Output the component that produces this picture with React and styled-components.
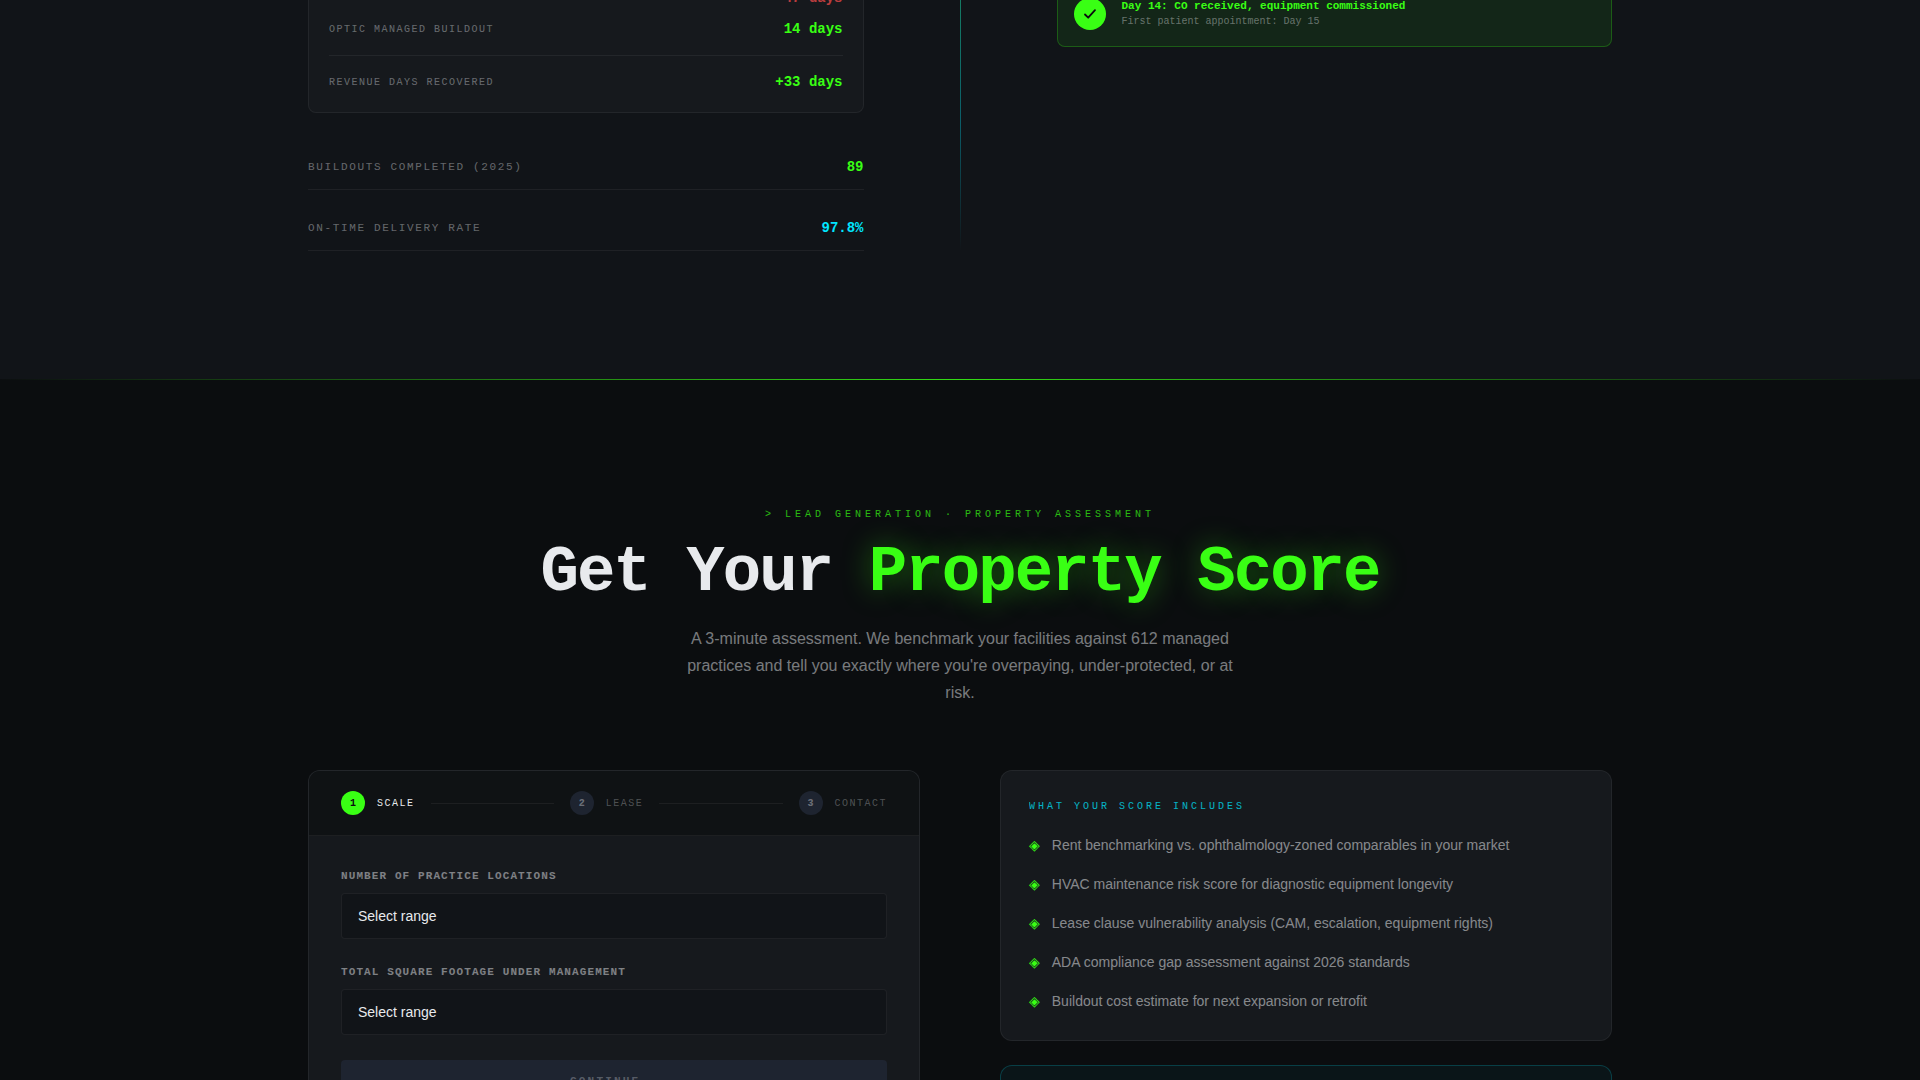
import React from "react";
import styled, { createGlobalStyle } from "styled-components";

const mono = `"Liberation Mono", "DejaVu Sans Mono", monospace`;
const sans = `"Liberation Sans", Arial, sans-serif`;

const c = {
  ink: "#0b0d0f",
  slate: "#111418",
  panel: "#16191d",
  steel: "#1e2430",
  line: "rgba(255, 255, 255, 0.06)",
  green: "#39ff14",
  cyan: "#00e5ff",
  red: "#ff4d4d",
  text: "#e8eaed",
};

const GlobalStyle = createGlobalStyle`
  *, *::before, *::after { box-sizing: border-box; }
  body { margin: 0; background: ${c.ink}; color: ${c.text}; font-family: ${sans}; }
  h1, h2, h3, p, ul, dl, dd, ol { margin: 0; padding: 0; }
  ul, ol { list-style: none; }
`;

const Viewport = styled.main`
  height: 100vh;
  overflow: hidden;
`;

const Container = styled.div`
  max-width: 1400px;
  margin: 0 auto;
  padding: 0 48px;
`;

/* Buildout section, scrolled partly past the top edge */
const BuildoutSection = styled.section`
  position: relative;
  margin-top: -34px;
  padding-bottom: 129px;
  background: ${c.slate};

  &::after {
    content: "";
    position: absolute;
    inset: auto 0 0;
    height: 1px;
    background: linear-gradient(90deg, ${c.ink}, ${c.green}, ${c.ink});
    opacity: 0.85;
  }
`;

const SplitGrid = styled.div`
  display: grid;
  grid-template-columns: 1fr 1px 1fr;
  gap: 96px;
`;

const Divider = styled.div`
  background: linear-gradient(
    to bottom,
    rgba(29, 240, 170, 0.5),
    rgba(0, 229, 255, 0.35) 55%,
    transparent
  );
`;

const Comparison = styled.dl`
  display: flex;
  flex-direction: column;
  gap: 9px;
  padding: 20px 20px 19px;
  background: ${c.panel};
  border: 1px solid ${c.line};
  border-radius: 8px;
`;

const Row = styled.div`
  display: flex;
  justify-content: space-between;
  align-items: center;
`;

const TotalRow = styled(Row)`
  margin-top: 6px;
  padding-top: 15px;
  border-top: 1px solid ${c.line};
`;

const RowLabel = styled.dt`
  font: 400 10px/17px ${mono};
  letter-spacing: 0.15em;
  text-transform: uppercase;
  color: rgba(232, 234, 237, 0.4);
`;

const RowValue = styled.dd`
  font: 700 14px/22px ${mono};
  color: ${(p) => p.$color};
  opacity: ${(p) => (p.$muted ? 0.7 : 1)};
`;

const Metrics = styled.dl`
  display: flex;
  flex-direction: column;
  gap: 27px;
  margin-top: 43px;
`;

const Metric = styled(Row)`
  padding-bottom: 11px;
  border-bottom: 1px solid ${c.line};
`;

const MetricLabel = styled(RowLabel)`
  font-size: 11px;
`;

const Timeline = styled.div`
  padding-top: 15px;
`;

const DoneCard = styled.article`
  display: flex;
  align-items: center;
  gap: 16px;
  padding: 16px;
  background: rgba(57, 255, 20, 0.08);
  border: 1px solid rgba(57, 255, 20, 0.25);
  border-radius: 8px;
`;

const CheckBadge = styled.span`
  display: grid;
  place-items: center;
  width: 32px;
  height: 32px;
  border-radius: 50%;
  background: ${c.green};
`;

const DoneTitle = styled.h3`
  font: 700 11px/16px ${mono};
  color: ${c.green};
`;

const DoneNote = styled.p`
  font: 400 10px/16px ${mono};
  color: rgba(232, 234, 237, 0.4);
`;

/* Score section */
const ScoreSection = styled.section`
  padding: 128px 0;
`;

const Intro = styled.header`
  display: flex;
  flex-direction: column;
  align-items: center;
  gap: 16px;
  margin-bottom: 64px;
  text-align: center;
`;

const Eyebrow = styled.p`
  font: 400 10px/14px ${mono};
  letter-spacing: 0.4em;
  text-transform: uppercase;
  color: ${c.green};
  opacity: 0.7;
`;

const Title = styled.h1`
  font: 700 64px/71px ${mono};
  letter-spacing: -0.03em;
  color: ${c.text};
`;

const Glow = styled.span`
  color: ${c.green};
  text-shadow: 0 0 30px rgba(57, 255, 20, 0.4);
`;

const Lead = styled.p`
  max-width: 560px;
  font-size: 16px;
  line-height: 27px;
  color: rgba(232, 234, 237, 0.5);
`;

const Columns = styled.div`
  display: grid;
  grid-template-columns: 1fr 1fr;
  gap: 80px;
  align-items: start;
`;

const FormCard = styled.form`
  overflow: hidden;
  background: ${c.panel};
  border: 1px solid ${c.line};
  border-radius: 12px;
`;

const Steps = styled.ol`
  display: flex;
  align-items: center;
  gap: 16px;
  padding: 20px 32px;
  background: #0f1214;
  border-bottom: 1px solid ${c.line};
`;

const Step = styled.li`
  display: flex;
  align-items: center;
  gap: 12px;
  font: 400 10px/15px ${mono};
  letter-spacing: 0.15em;
  text-transform: uppercase;
  color: ${(p) => (p.$active ? c.text : "rgba(232, 234, 237, 0.3)")};
`;

const StepNumber = styled.span`
  display: grid;
  place-items: center;
  width: 24px;
  height: 24px;
  border-radius: 50%;
  font-weight: 700;
  letter-spacing: 0;
  background: ${(p) => (p.$active ? c.green : c.steel)};
  color: ${(p) => (p.$active ? c.ink : "rgba(232, 234, 237, 0.4)")};
`;

const StepLine = styled.li`
  flex: 1;
  height: 1px;
  background: ${c.line};
`;

const FormBody = styled.div`
  display: flex;
  flex-direction: column;
  gap: 25px;
  padding: 32px;
`;

const Field = styled.div`
  display: flex;
  flex-direction: column;
  gap: 8px;
`;

const FieldLabel = styled.label`
  font: 700 11px/17px ${mono};
  letter-spacing: 0.1em;
  text-transform: uppercase;
  color: rgba(232, 234, 237, 0.5);
`;

const Select = styled.select`
  appearance: none;
  width: 100%;
  padding: 14px 16px;
  font: 400 14px/16px ${sans};
  color: ${c.text};
  background: ${c.slate};
  border: 1px solid ${c.line};
  border-radius: 4px;
`;

const ContinueButton = styled.button`
  padding: 14px;
  border: 0;
  border-radius: 4px;
  font: 700 11px/14px ${mono};
  letter-spacing: 0.2em;
  text-transform: uppercase;
  color: rgba(232, 234, 237, 0.3);
  background: ${c.steel};
`;

const Aside = styled.aside`
  display: flex;
  flex-direction: column;
  gap: 24px;
`;

const InfoCard = styled.section`
  padding: 28px 28px 27px;
  background: ${(p) => (p.$accent ? "rgba(0, 229, 255, 0.04)" : c.panel)};
  border: 1px solid ${(p) => (p.$accent ? "rgba(0, 229, 255, 0.2)" : c.line)};
  border-radius: 12px;
`;

const InfoTitle = styled.h2`
  margin-bottom: 19px;
  font: 400 10px/16px ${mono};
  letter-spacing: 0.3em;
  text-transform: uppercase;
  color: ${c.cyan};
  opacity: 0.75;
`;

const Benefits = styled.ul`
  display: flex;
  flex-direction: column;
  gap: 16px;
`;

const Benefit = styled.li`
  display: flex;
  gap: 12px;
  font-size: 14px;
  line-height: 23px;
  color: rgba(232, 234, 237, 0.55);

  &::before {
    content: "◈";
    font-family: "DejaVu Sans", sans-serif;
    color: ${c.green};
  }
`;

const steps = ["Scale", "Lease", "Contact"];

const fields = [
  { id: "locations", label: "Number of practice locations" },
  { id: "footage", label: "Total square footage under management" },
];

const benefits = [
  "Rent benchmarking vs. ophthalmology-zoned comparables in your market",
  "HVAC maintenance risk score for diagnostic equipment longevity",
  "Lease clause vulnerability analysis (CAM, escalation, equipment rights)",
  "ADA compliance gap assessment against 2026 standards",
  "Buildout cost estimate for next expansion or retrofit",
];

function Buildout() {
  return (
    <BuildoutSection>
      <Container>
        <SplitGrid>
          <div>
            <Comparison>
              <Row>
                <RowLabel />
                <RowValue $color={c.red} $muted>47 days</RowValue>
              </Row>
              <Row>
                <RowLabel>Optic managed buildout</RowLabel>
                <RowValue $color={c.green}>14 days</RowValue>
              </Row>
              <TotalRow>
                <RowLabel>Revenue days recovered</RowLabel>
                <RowValue $color={c.green}>+33 days</RowValue>
              </TotalRow>
            </Comparison>
            <Metrics>
              <Metric>
                <MetricLabel>Buildouts completed (2025)</MetricLabel>
                <RowValue $color={c.green}>89</RowValue>
              </Metric>
              <Metric>
                <MetricLabel>On-time delivery rate</MetricLabel>
                <RowValue $color={c.cyan}>97.8%</RowValue>
              </Metric>
            </Metrics>
          </div>
          <Divider />
          <Timeline>
            <DoneCard>
              <CheckBadge>
                <svg width="14" height="14" viewBox="0 0 14 14" fill="none" aria-hidden="true">
                  <path d="M2 7.5L5.2 10.7L12 3.2" stroke={c.ink} strokeWidth="1.8" strokeLinecap="round" strokeLinejoin="round" />
                </svg>
              </CheckBadge>
              <div>
                <DoneTitle>Day 14: CO received, equipment commissioned</DoneTitle>
                <DoneNote>First patient appointment: Day 15</DoneNote>
              </div>
            </DoneCard>
          </Timeline>
        </SplitGrid>
      </Container>
    </BuildoutSection>
  );
}

function ScoreForm() {
  return (
    <FormCard>
      <Steps>
        {steps.map((name, i) => (
          <React.Fragment key={name}>
            {i > 0 && <StepLine aria-hidden="true" />}
            <Step $active={i === 0}>
              <StepNumber $active={i === 0}>{i + 1}</StepNumber>
              {name}
            </Step>
          </React.Fragment>
        ))}
      </Steps>
      <FormBody>
        {fields.map((f) => (
          <Field key={f.id}>
            <FieldLabel htmlFor={f.id}>{f.label}</FieldLabel>
            <Select id={f.id} defaultValue="">
              <option value="">Select range</option>
            </Select>
          </Field>
        ))}
        <ContinueButton type="button" disabled>Continue →</ContinueButton>
      </FormBody>
    </FormCard>
  );
}

export default function App() {
  return (
    <>
      <GlobalStyle />
      <Viewport>
        <Buildout />
        <ScoreSection>
          <Container>
            <Intro>
              <Eyebrow>&gt; Lead generation · Property assessment</Eyebrow>
              <Title>
                Get Your <Glow>Property Score</Glow>
              </Title>
              <Lead>
                A 3-minute assessment. We benchmark your facilities against 612 managed
                practices and tell you exactly where you're overpaying, under-protected, or
                at risk.
              </Lead>
            </Intro>
            <Columns>
              <ScoreForm />
              <Aside>
                <InfoCard>
                  <InfoTitle>What your score includes</InfoTitle>
                  <Benefits>
                    {benefits.map((b) => (
                      <Benefit key={b}>{b}</Benefit>
                    ))}
                  </Benefits>
                </InfoCard>
                <InfoCard $accent />
              </Aside>
            </Columns>
          </Container>
        </ScoreSection>
      </Viewport>
    </>
  );
}
